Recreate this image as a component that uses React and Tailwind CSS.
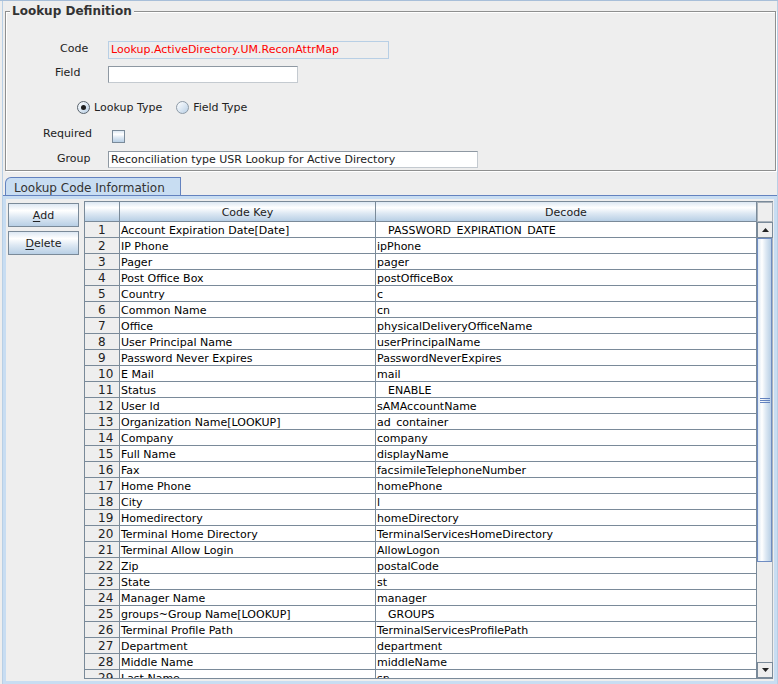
import React from "react";

const rows = [
  ["Account Expiration Date[Date]", "__PASSWORD_EXPIRATION_DATE"],
  ["IP Phone", "ipPhone"],
  ["Pager", "pager"],
  ["Post Office Box", "postOfficeBox"],
  ["Country", "c"],
  ["Common Name", "cn"],
  ["Office", "physicalDeliveryOfficeName"],
  ["User Principal Name", "userPrincipalName"],
  ["Password Never Expires", "PasswordNeverExpires"],
  ["E Mail", "mail"],
  ["Status", "__ENABLE"],
  ["User Id", "sAMAccountName"],
  ["Organization Name[LOOKUP]", "ad_container"],
  ["Company", "company"],
  ["Full Name", "displayName"],
  ["Fax", "facsimileTelephoneNumber"],
  ["Home Phone", "homePhone"],
  ["City", "l"],
  ["Homedirectory", "homeDirectory"],
  ["Terminal Home Directory", "TerminalServicesHomeDirectory"],
  ["Terminal Allow Login", "AllowLogon"],
  ["Zip", "postalCode"],
  ["State", "st"],
  ["Manager Name", "manager"],
  ["groups~Group Name[LOOKUP]", "__GROUPS"],
  ["Terminal Profile Path", "TerminalServicesProfilePath"],
  ["Department", "department"],
  ["Middle Name", "middleName"],
  ["Last Name", "sn"],
];

// underscores sit below the cell's clip in the original, so they only take up space
const Decode = ({ value }) => {
  const parts = value.split("_");
  return (
    <>
      {parts.map((p, i) => (
        <React.Fragment key={i}>
          {i > 0 && <span className="text-transparent">_</span>}
          {p}
        </React.Fragment>
      ))}
    </>
  );
};

const Radio = ({ checked }) => (
  <span
    className={`w-[13px] h-[13px] rounded-full border flex items-center justify-center bg-[linear-gradient(135deg,#ffffff_0%,#dde8f3_50%,#b8cfe5_100%)] ${
      checked ? "border-[#59636d]" : "border-[#8d9aa7]"
    }`}
  >
    {checked && <span className="w-[5px] h-[5px] rounded-full bg-[#1e1e1e]" />}
  </span>
);

const Arrow = ({ up }) => (
  <svg width="7" height="4" viewBox="0 0 7 4">
    {up ? <path d="M0 4 L3.5 0 L7 4 Z" fill="#222" /> : <path d="M0 0 L3.5 4 L7 0 Z" fill="#222" />}
  </svg>
);

const gradV =
  "bg-[linear-gradient(to_bottom,#dde8f3_0%,#ffffff_30%,#dde8f3_60%,#b8cfe5_100%)]";

const App = () => {
  return (
    <div className="w-[778px] h-[684px] overflow-hidden bg-[#eeeeee] border-t border-[#a8bfd9] font-['DejaVu_Sans',sans-serif] text-[11px] text-[#222]">
      <div className="ml-[2px] h-[683px] border-l border-r border-[#b8cfe5] flex flex-col">
        {/* Lookup Definition */}
        <div className="pl-[2px] pt-[10px]">
          <div className="relative w-[771px] h-[160px] border border-[#8e8f8f] shadow-[inset_1px_1px_0_#ffffff,1px_1px_0_#ffffff]">
            <span className="absolute left-[4px] -top-[8px] px-[2px] bg-[#eeeeee] text-[12px] font-bold leading-[15px] text-[#333]">
              Lookup Definition
            </span>

            <div className="mt-[29px] flex h-[18px]">
              <div className="w-[102px] pl-[54px] leading-[15px]">Code</div>
              <div className="w-[281px] h-[18px] border border-[#b8cfe5] pl-[2px] leading-[16px] text-[#ff0000]">
                Lookup.ActiveDirectory.UM.ReconAttrMap
              </div>
            </div>

            <div className="mt-[7px] flex h-[17px]">
              <div className="w-[102px] pl-[49px] leading-[13px]">Field</div>
              <div className="w-[190px] h-[17px] bg-white border border-[#8e98a2] border-r-[#c4cad0] border-b-[#c4cad0]" />
            </div>

            <div className="mt-[18px] flex items-center h-[13px] pl-[71px] leading-[13px]">
              <Radio checked />
              <span className="ml-[4px]">Lookup Type</span>
              <span className="ml-[14px]">
                <Radio />
              </span>
              <span className="ml-[4px]">Field Type</span>
            </div>

            <div className="mt-[16px] flex h-[13px]">
              <div className="w-[106px] pl-[37px] leading-[13px] -mt-[3px]">Required</div>
              <span className={`w-[13px] h-[13px] border border-[#7a8a99] ${gradV}`} />
            </div>

            <div className="mt-[8px] flex h-[17px]">
              <div className="w-[102px] pl-[51px] leading-[13px] mt-[1px]">Group</div>
              <div className="w-[370px] h-[17px] bg-white border border-[#8e98a2] border-r-[#c4cad0] border-b-[#c4cad0] pl-[2px] leading-[15px]">
                Reconciliation type USR Lookup for Active Directory
              </div>
            </div>
          </div>
        </div>

        {/* tab strip */}
        <div className="pl-[2px] mt-[6px] flex">
          <div className="w-[176px] h-[18px] bg-[#c8ddf2] border-t border-l border-r border-[#6382bf] rounded-tl-[6px] pl-[8px] text-[12px] leading-[20px] text-[#333] overflow-visible">
            Lookup Code Information
          </div>
        </div>

        {/* tab content */}
        <div className="flex-1 border-t border-[#6382bf] bg-[#c8ddf2] p-[3px] flex">
          <div className="flex-1 bg-[#eeeeee] flex">
            <div className="pl-[2px] pt-[4px] flex flex-col gap-[4px]">
              <button
                type="button"
                className={`w-[71px] h-[24px] border border-[#7a8a99] ${gradV} leading-[24px] text-center`}
              >
                <span className="underline underline-offset-[2px]">A</span>dd
              </button>
              <button
                type="button"
                className={`w-[71px] h-[24px] border border-[#7a8a99] ${gradV} leading-[24px] text-center`}
              >
                <span className="underline underline-offset-[2px]">D</span>elete
              </button>
            </div>

            <div className="ml-[5px] mt-[2px] w-[689px] h-[478px] border-l border-t border-b border-[#7a8a99] flex overflow-hidden">
              <div className="w-[672px] flex flex-col">
                <div className="flex h-[20px] shrink-0">
                  <div className={`w-[35px] border-r border-b border-[#7a8a99] ${gradV}`} />
                  <div className={`w-[256px] border-r border-b border-[#7a8a99] ${gradV} text-center leading-[21px]`}>
                    Code Key
                  </div>
                  <div className={`w-[381px] border-r border-b border-[#7a8a99] ${gradV} text-center leading-[21px]`}>
                    Decode
                  </div>
                </div>
                <div className="flex-1 overflow-hidden bg-white text-black">
                  {rows.map((r, i) => (
                    <div key={i} className="flex h-[16px]">
                      <div className="w-[35px] border-r border-b border-[#7a8a99] bg-[#eeeeee] pl-[13px] text-[12px] leading-[17px] text-[#222] overflow-hidden">
                        {i + 1}
                      </div>
                      <div className="w-[256px] border-r border-b border-[#7a8a99] pl-[1px] leading-[17px] whitespace-nowrap overflow-hidden">
                        {r[0]}
                      </div>
                      <div className="w-[381px] border-r border-b border-[#7a8a99] pl-[1px] leading-[17px] whitespace-nowrap overflow-hidden">
                        <Decode value={r[1]} />
                      </div>
                    </div>
                  ))}
                </div>
              </div>

              {/* vertical scrollbar */}
              <div className="w-[16px] flex flex-col">
                <div className="h-[20px] shrink-0 border border-[#a9b2bb] bg-[#eeeeee]" />
                <div className="h-[16px] shrink-0 border border-[#7a8a99] bg-[#eeeeee] flex items-center justify-center">
                  <Arrow up />
                </div>
                <div className="flex-1 bg-[#eeeeee] flex flex-col border-r border-[#a9b2bb]">
                  <div className="h-[324px] border border-[#6f8cc2] bg-[linear-gradient(to_right,#dde8f3_0%,#ffffff_30%,#dde8f3_60%,#b8cfe5_100%)] flex flex-col items-center justify-center gap-[1px]">
                    <span className="w-[10px] h-[1px] bg-[#6382bf]" />
                    <span className="w-[10px] h-[1px] bg-[#6382bf]" />
                    <span className="w-[10px] h-[1px] bg-[#6382bf]" />
                  </div>
                </div>
                <div className="h-[16px] shrink-0 border border-[#7a8a99] bg-[#eeeeee] flex items-center justify-center">
                  <Arrow />
                </div>
              </div>
            </div>
          </div>
        </div>
      </div>
    </div>
  );
};

export default App;
